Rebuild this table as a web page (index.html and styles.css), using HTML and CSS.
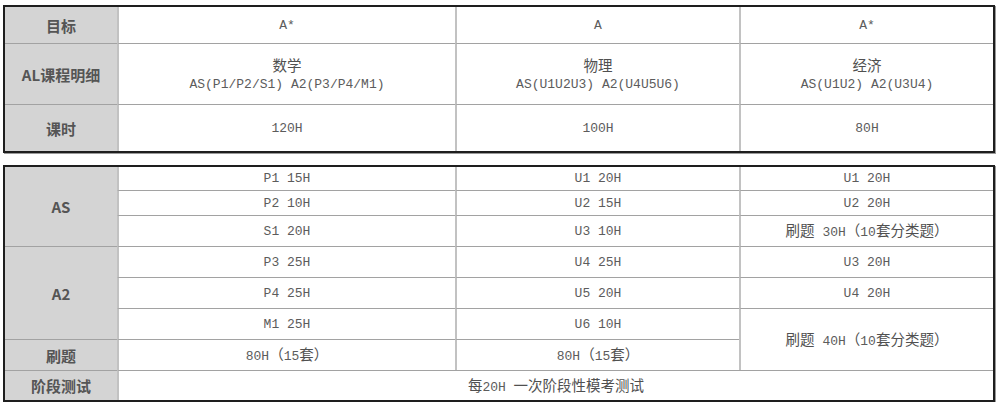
FILE: index.html
```html
<!DOCTYPE html>
<html lang="zh">
<head>
<meta charset="utf-8">
<title>AL课程规划</title>
<link rel="stylesheet" href="styles.css">
</head>
<body>
<div class="page">
  <table class="grid">
    <colgroup><col class="c1"><col class="c2"><col class="c3"><col class="c4"></colgroup>
    <tr class="r-goal">
      <th>目标</th><td>A*</td><td>A</td><td>A*</td>
    </tr>
    <tr class="r-detail">
      <th>AL课程明细</th>
      <td><span class="zh">数学</span><br>AS(P1/P2/S1) A2(P3/P4/M1)</td>
      <td><span class="zh">物理</span><br>AS(U1U2U3) A2(U4U5U6)</td>
      <td><span class="zh">经济</span><br>AS(U1U2) A2(U3U4)</td>
    </tr>
    <tr class="r-hours">
      <th>课时</th><td>120H</td><td>100H</td><td>80H</td>
    </tr>
  </table>

  <table class="grid second">
    <colgroup><col class="c1"><col class="c2"><col class="c3"><col class="c4"></colgroup>
    <tr class="r-first">
      <th rowspan="3">AS</th><td>P1 15H</td><td>U1 20H</td><td>U1 20H</td>
    </tr>
    <tr class="r-short">
      <td>P2 10H</td><td>U2 15H</td><td>U2 20H</td>
    </tr>
    <tr class="r-std">
      <td>S1 20H</td><td>U3 10H</td><td><span class="zh">刷题</span> 30H<span class="zh">（</span>10<span class="zh">套分类题）</span></td>
    </tr>
    <tr class="r-std">
      <th rowspan="3">A2</th><td>P3 25H</td><td>U4 25H</td><td>U3 20H</td>
    </tr>
    <tr class="r-std">
      <td>P4 25H</td><td>U5 20H</td><td>U4 20H</td>
    </tr>
    <tr class="r-std">
      <td>M1 25H</td><td>U6 10H</td><td rowspan="2"><span class="zh">刷题</span> 40H<span class="zh">（</span>10<span class="zh">套分类题）</span></td>
    </tr>
    <tr class="r-std">
      <th>刷题</th><td>80H<span class="zh">（</span>15<span class="zh">套）</span></td><td>80H<span class="zh">（</span>15<span class="zh">套）</span></td>
    </tr>
    <tr class="r-last">
      <th>阶段测试</th><td colspan="3"><span class="zh">每</span>20H <span class="zh">一次阶段性模考测试</span></td>
    </tr>
  </table>
</div>
</body>
</html>
```

FILE: styles.css
```css
html, body {
  margin: 0;
  padding: 0;
  background: #ffffff;
}

.page {
  padding: 5px 0 0 3px;
}

.grid {
  width: 992px;
  table-layout: fixed;
  border-collapse: separate;
  border-spacing: 0;
  border: 2px solid #1e1e1e;
  box-shadow: 1px 1px 0 #9a9a9a;
}

.second {
  margin-top: 12px;
}

.c1 { width: 112px; }
.c2 { width: 338px; }
.c3 { width: 284px; }
.c4 { width: 254px; }

.grid th,
.grid td {
  padding: 0;
  text-align: center;
  vertical-align: middle;
  border-top: 1px solid #a2a2a2;
  border-left: 2px solid #c8c8c8;
  line-height: 17px;
}

.grid tr:first-child > th,
.grid tr:first-child > td {
  border-top: 0;
}

.grid th {
  border-left: 0;
  background: #d4d4d4;
  color: #555555;
  font-family: "Noto Sans CJK SC", "Liberation Sans", sans-serif;
  font-size: 15px;
  font-weight: 700;
}

.grid td {
  border-left-color: #c2c2c2;
  color: #5c5c5c;
  font-family: "Liberation Mono", "Noto Sans CJK SC", monospace;
  font-size: 13px;
}

.zh {
  font-family: "Noto Sans CJK SC", sans-serif;
  font-size: 14.5px;
  color: #505050;
}

.r-goal { height: 36px; }
.r-detail { height: 61px; }
.r-hours { height: 47px; }

.r-first { height: 23px; }
.r-short { height: 25px; }
.r-std { height: 31px; }
.r-last { height: 30px; }
```
